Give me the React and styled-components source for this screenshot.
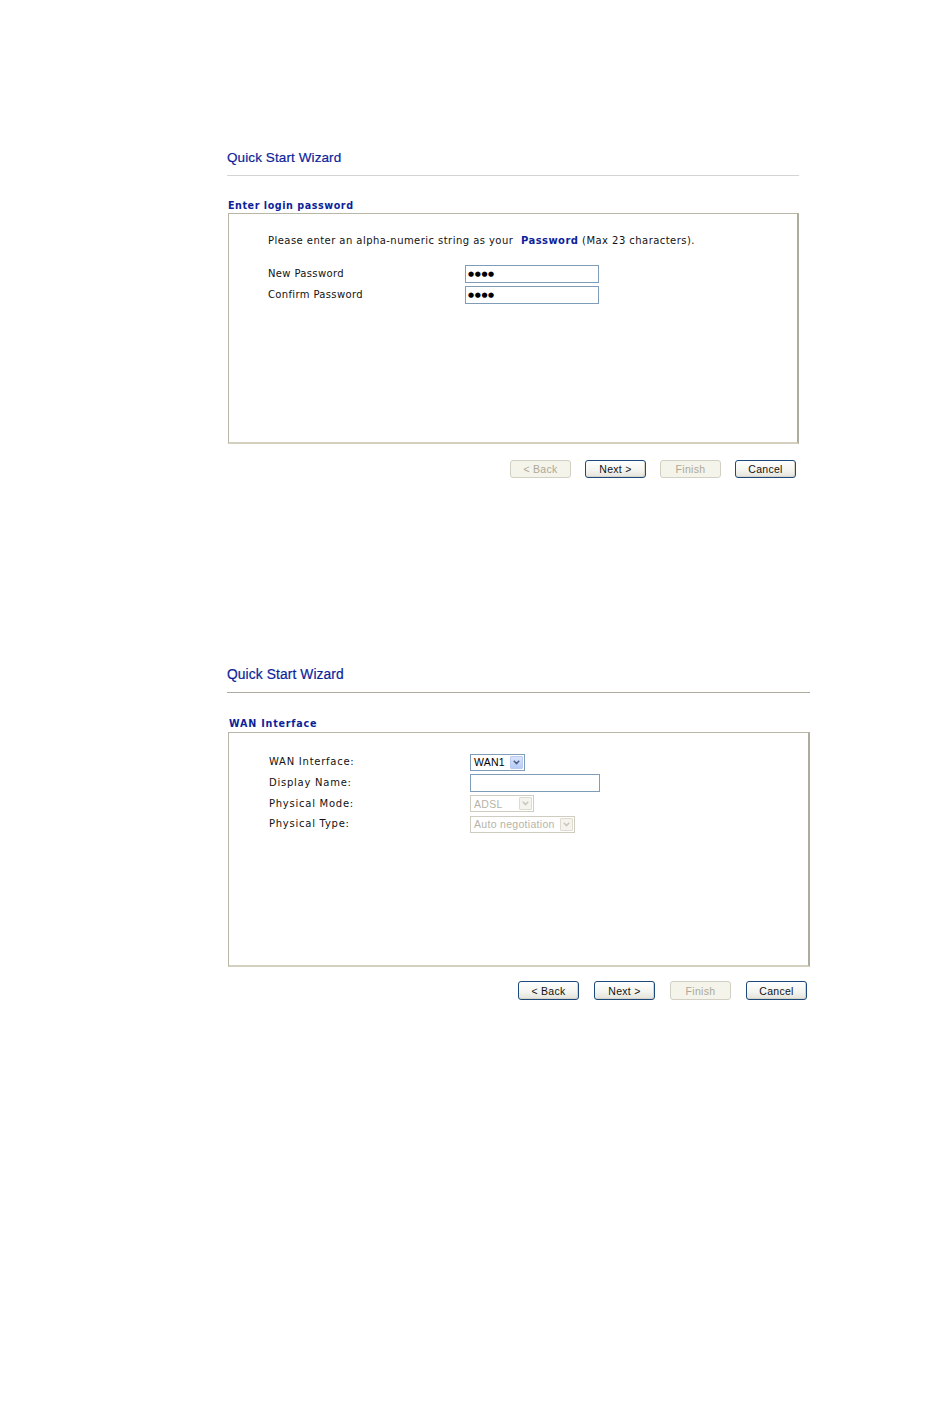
import React from "react";
import styled, { createGlobalStyle, css } from "styled-components";

const GlobalStyle = createGlobalStyle`
  html, body { margin: 0; padding: 0; background: #ffffff; }
  body { font-family: "DejaVu Sans", Verdana, sans-serif; color: #000; }
`;

const Page = styled.div`
  padding: 150px 0 0 227px;
  min-height: 1420px;
  box-sizing: border-box;
`;

const Wizard = styled.section`
  width: ${(p) => p.$width}px;
  margin-bottom: ${(p) => p.$gap || 0}px;
`;

const Title = styled.h1`
  margin: 0;
  font-family: Tahoma, "Liberation Sans", Arial, sans-serif;
  font-weight: normal;
  font-size: ${(p) => p.$size || 13}px;
  line-height: 16px;
  color: #0d1f9a;
  letter-spacing: 0.1px;
  -webkit-text-stroke: 0.2px #0d1f9a;
`;

const Rule = styled.hr`
  margin: ${(p) => p.$top}px 0 0 0;
  border: 0;
  height: 1px;
  background: ${(p) => p.$color};
`;

const Section = styled.h2`
  margin: ${(p) => p.$top}px 0 0 ${(p) => p.$indent}px;
  font-family: "DejaVu Sans", Verdana, sans-serif;
  font-weight: bold;
  font-size: 9.6px;
  line-height: 12px;
  color: #0d1f9a;
  letter-spacing: ${(p) => p.$spacing}px;
`;

const Box = styled.div`
  margin: ${(p) => p.$top}px 0 0 1px;
  height: ${(p) => p.$height}px;
  box-sizing: border-box;
  border: 1px solid #b8b6a6;
  border-right: 2px solid #aeac9c;
  border-bottom: 2px solid #d3d0bf;
  padding: ${(p) => p.$padTop}px 0 0 ${(p) => p.$padLeft}px;
`;

const Intro = styled.p`
  margin: 0 0 ${(p) => p.$after}px 0;
  font-size: 10px;
  line-height: 14px;
  letter-spacing: 0.45px;
  color: #111;
`;

const Strong = styled.b`
  color: #0d1f9a;
  margin-left: 4px;
`;

const Form = styled.div`
  display: grid;
  grid-template-columns: ${(p) => p.$labelWidth}px auto;
  grid-auto-rows: ${(p) => p.$rowHeight}px;
  align-items: center;
`;

const Label = styled.span`
  font-size: 10px;
  line-height: 14px;
  letter-spacing: ${(p) => p.$spacing}px;
  color: #111;
`;

const TextInput = styled.div`
  width: ${(p) => p.$width}px;
  height: ${(p) => p.$height}px;
  box-sizing: border-box;
  border: 1px solid #7f9db9;
  background: #fff;
  display: flex;
  align-items: center;
  padding-left: 2px;
  font-family: "DejaVu Sans", sans-serif;
  font-size: 7px;
  letter-spacing: 0.6px;
  color: #000;
`;

const Select = styled.div`
  width: ${(p) => p.$width}px;
  height: 17px;
  box-sizing: border-box;
  border: 1px solid ${(p) => (p.$disabled ? "#cfcdc0" : "#7f9db9")};
  background: #fff;
  display: flex;
  align-items: stretch;
  font-family: Tahoma, "Liberation Sans", Arial, sans-serif;
  font-size: 10.5px;
  color: ${(p) => (p.$disabled ? "#b6b4a8" : "#000")};
`;

const SelectText = styled.span`
  flex: 1;
  display: flex;
  align-items: center;
  padding-left: 3px;
  letter-spacing: ${(p) => (p.$disabled ? "0.3px" : "0.2px")};
  white-space: nowrap;
  overflow: hidden;
`;

const Arrow = styled.span`
  width: 13px;
  margin: 1px;
  display: flex;
  align-items: center;
  justify-content: center;
  border-radius: 1px;
  box-sizing: border-box;
  ${(p) =>
    p.$disabled
      ? css`
          background: #f4f3ee;
          border: 1px solid #dedcd0;
        `
      : css`
          background: linear-gradient(#d9e4fb, #b6cbf6);
          border: 1px solid #b9cbf2;
        `}
`;

const Buttons = styled.div`
  display: flex;
  justify-content: flex-end;
  gap: ${(p) => p.$gap}px;
  margin-top: ${(p) => p.$top}px;
  padding-right: ${(p) => p.$right}px;
`;

const Button = styled.button`
  width: ${(p) => p.$width}px;
  height: ${(p) => p.$height}px;
  box-sizing: border-box;
  padding: 0;
  border-radius: 3px;
  font-family: Tahoma, "Liberation Sans", Arial, sans-serif;
  font-size: 10.5px;
  letter-spacing: 0.3px;
  cursor: default;
  ${(p) =>
    p.disabled
      ? css`
          border: 1px solid #d2d0c4;
          background: #f5f4ea;
          color: #aca899;
        `
      : css`
          border: 1px solid #1c4a7c;
          background: linear-gradient(#ffffff 0%, #f3f3ef 60%, #e3e2da 100%);
          color: #111;
          box-shadow: inset -1px -1px 0 #d6d4c8;
        `}
`;

function Chevron({ disabled }) {
  return (
    <svg width="7" height="5" viewBox="0 0 7 5">
      <path
        d="M0.8 0.8 L3.5 3.6 L6.2 0.8"
        fill="none"
        stroke={disabled ? "#c9c7bb" : "#4d6185"}
        strokeWidth="1.5"
      />
    </svg>
  );
}

function Dropdown({ width, value, disabled }) {
  return (
    <Select $width={width} $disabled={disabled}>
      <SelectText $disabled={disabled}>{value}</SelectText>
      <Arrow $disabled={disabled}>
        <Chevron disabled={disabled} />
      </Arrow>
    </Select>
  );
}

function ButtonBar({ backDisabled, height, gap, top, right }) {
  return (
    <Buttons $gap={gap} $top={top} $right={right}>
      <Button $width={61} $height={height} disabled={backDisabled}>&lt; Back</Button>
      <Button $width={61} $height={height}>Next &gt;</Button>
      <Button $width={61} $height={height} disabled>Finish</Button>
      <Button $width={61} $height={height}>Cancel</Button>
    </Buttons>
  );
}

export default function App() {
  return (
    <>
      <GlobalStyle />
      <Page>
        <Wizard $width={572} $gap={189}>
          <Title $size={13.5}>Quick Start Wizard</Title>
          <Rule $top={9} $color="#d4d4d4" />
          <Section $top={24} $indent={1} $spacing={0.55}>Enter login password</Section>
          <Box $top={1} $height={231} $padTop={20} $padLeft={39}>
            <Intro $after={15}>
              Please enter an alpha-numeric string as your <Strong>Password</Strong> (Max 23 characters).
            </Intro>
            <Form $labelWidth={197} $rowHeight={21}>
              <Label $spacing={0.35}>New Password</Label>
              <TextInput $width={134} $height={18}>●●●●</TextInput>
              <Label $spacing={0.35}>Confirm Password</Label>
              <TextInput $width={134} $height={18}>●●●●</TextInput>
            </Form>
          </Box>
          <ButtonBar backDisabled height={18} gap={14} top={16} right={3} />
        </Wizard>

        <Wizard $width={583}>
          <Title $size={13.8}>Quick Start Wizard</Title>
          <Rule $top={9} $color="#aeac9e" />
          <Section $top={25} $indent={2} $spacing={0.8}>WAN Interface</Section>
          <Box $top={2} $height={235} $padTop={19} $padLeft={40}>
            <Form $labelWidth={201} $rowHeight={20.7}>
              <Label $spacing={0.75}>WAN Interface:</Label>
              <Dropdown width={55} value="WAN1" />
              <Label $spacing={0.75}>Display Name:</Label>
              <TextInput $width={130} $height={18} />
              <Label $spacing={0.75}>Physical Mode:</Label>
              <Dropdown width={64} value="ADSL" disabled />
              <Label $spacing={0.75}>Physical Type:</Label>
              <Dropdown width={105} value="Auto negotiation" disabled />
            </Form>
          </Box>
          <ButtonBar height={19} gap={15} top={14} right={3} />
        </Wizard>
      </Page>
    </>
  );
}
